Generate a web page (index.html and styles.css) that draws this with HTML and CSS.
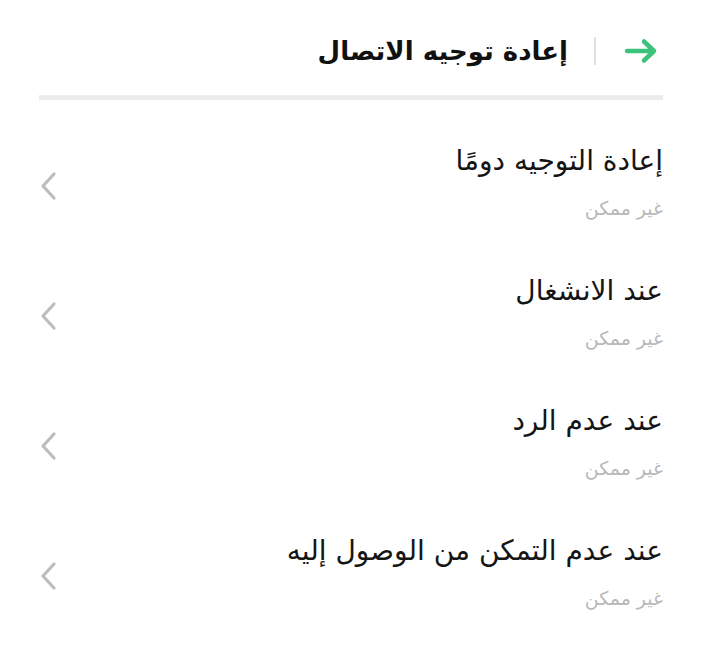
FILE: index.html
```html
<!DOCTYPE html>
<html lang="ar" dir="rtl">
<head>
    <meta charset="UTF-8">
    <meta name="viewport" content="width=device-width, initial-scale=1.0">
    <title>إعادة توجيه الاتصال</title>
    <link rel="stylesheet" href="styles.css">
</head>
<body>
    <div class="page">
        <header class="topbar">
            <a href="#" class="back">
                <svg width="34" height="26" viewBox="0 0 34 26">
                    <path d="M3 13 H30 M20 3.5 L30 13 L20 22.5" fill="none" stroke="#3cc27a" stroke-width="4.5" stroke-linecap="round" stroke-linejoin="round"/>
                </svg>
            </a>
            <span class="sep"></span>
            <h1 class="title">إعادة توجيه الاتصال</h1>
        </header>

        <!-- forwarding options -->
        <ul class="list">
            <li class="row">
                <div class="text">
                    <div class="name">إعادة التوجيه دومًا</div>
                    <div class="state">غير ممكن</div>
                </div>
                <span class="chev"><svg width="18" height="30" viewBox="0 0 18 30"><path d="M15 3 L4 15 L15 27" fill="none" stroke="#bdbdbd" stroke-width="3.2" stroke-linecap="round" stroke-linejoin="round"/></svg></span>
            </li>
            <li class="row">
                <div class="text">
                    <div class="name">عند الانشغال</div>
                    <div class="state">غير ممكن</div>
                </div>
                <span class="chev"><svg width="18" height="30" viewBox="0 0 18 30"><path d="M15 3 L4 15 L15 27" fill="none" stroke="#bdbdbd" stroke-width="3.2" stroke-linecap="round" stroke-linejoin="round"/></svg></span>
            </li>
            <li class="row">
                <div class="text">
                    <div class="name">عند عدم الرد</div>
                    <div class="state">غير ممكن</div>
                </div>
                <span class="chev"><svg width="18" height="30" viewBox="0 0 18 30"><path d="M15 3 L4 15 L15 27" fill="none" stroke="#bdbdbd" stroke-width="3.2" stroke-linecap="round" stroke-linejoin="round"/></svg></span>
            </li>
            <li class="row">
                <div class="text">
                    <div class="name">عند عدم التمكن من الوصول إليه</div>
                    <div class="state">غير ممكن</div>
                </div>
                <span class="chev"><svg width="18" height="30" viewBox="0 0 18 30"><path d="M15 3 L4 15 L15 27" fill="none" stroke="#bdbdbd" stroke-width="3.2" stroke-linecap="round" stroke-linejoin="round"/></svg></span>
            </li>
        </ul>
    </div>
</body>
</html>
```

FILE: styles.css
```css
* {
    margin: 0;
    padding: 0;
    box-sizing: border-box;
}

body {
    font-family: 'DejaVu Sans', 'Noto Sans', sans-serif;
    background-color: #ffffff;
    color: #111111;
}

.page {
    padding: 0 48px 0 39px;
}

.topbar {
    display: flex;
    align-items: center;
    height: 100px;
    border-bottom: 5px solid #ececec;
    padding-top: 6px;
}

.back {
    display: flex;
    margin-right: 5px;
}

.sep {
    width: 2px;
    height: 28px;
    background-color: #e2e2e2;
    margin: 0 28px 0 26px;
}

.title {
    font-size: 26px;
    font-weight: bold;
    color: #111111;
}

.list {
    list-style: none;
}

.row {
    display: flex;
    align-items: flex-start;
    justify-content: space-between;
    height: 130px;
    padding-top: 44px;
}

.name {
    font-size: 28px;
    line-height: 34px;
    color: #151515;
    margin-bottom: 19px;
}

.state {
    font-size: 19px;
    line-height: 22px;
    color: #b8b8b8;
}

.chev {
    display: flex;
    margin-top: 27px;
}
```
